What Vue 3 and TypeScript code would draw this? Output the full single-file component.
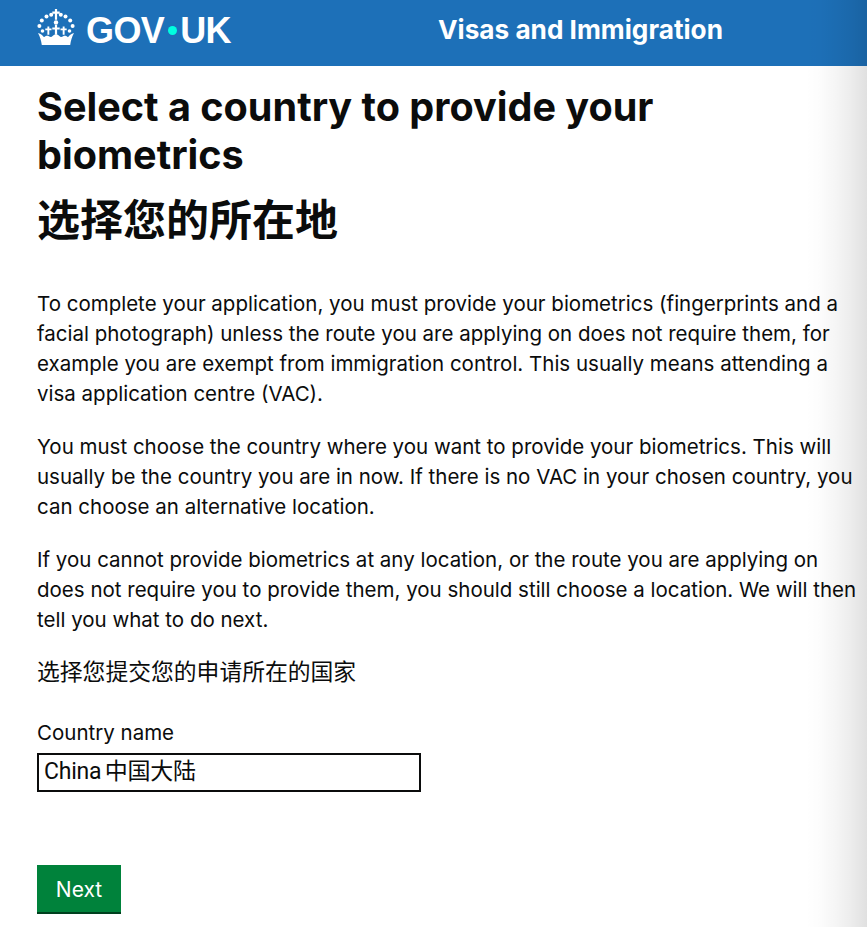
<script setup lang="ts">
const paragraphs: string[] = [
  'To complete your application, you must provide your biometrics (fingerprints and a facial photograph) unless the route you are applying on does not require them, for example you are exempt from immigration control. This usually means attending a visa application centre (VAC).',
  'You must choose the country where you want to provide your biometrics. This will usually be the country you are in now. If there is no VAC in your chosen country, you can choose an alternative location.',
  'If you cannot provide biometrics at any location, or the route you are applying on does not require you to provide them, you should still choose a location. We will then tell you what to do next.',
]
</script>

<template>
  <div class="page">
    <header class="bar">
      <div class="logo">
        <svg class="crown" viewBox="0 0 38 36" width="38" height="36" aria-hidden="true">
          <g fill="#fff">
            <path d="M17.9 0h2.2v2.6h2.6v2.2h-2.6v6h-2.200v-6h-2.600V2.600h2.600z" />
            <circle cx="9.500" cy="7.500" r="2" />
            <circle cx="14.200" cy="5.800" r="2" />
            <circle cx="23.800" cy="5.800" r="2" />
            <circle cx="28.500" cy="7.500" r="2" />
            <circle cx="4.800" cy="11.500" r="2" />
            <circle cx="33.200" cy="11.500" r="2" />
            <circle cx="2.400" cy="17" r="2" />
            <circle cx="35.600" cy="17" r="2" />
            <circle cx="19" cy="13.500" r="2.200" />
            <circle cx="5.500" cy="22" r="1.800" />
            <circle cx="32.500" cy="22" r="1.800" />
            <path d="M17.900 16h2.200v2.400h2.600v2.100h-2.600v5h-2.200v-5h-2.600v-2.100h2.600z" />
            <path d="M10.400 17.500h1.900v2h2.200v1.800h-2.200v4.400h-1.900v-4.400H8.300v-1.800h2.100z" />
            <path d="M25.700 17.500h1.900v2h2.100v1.800h-2.100v4.400h-1.900v-4.400h-2.200v-1.800h2.200z" />
            <path d="M1 24c3 1 4.800 2.600 6 4.200 2-1.500 3.500-1.800 4.800-1 1.600 1 2.600 1.100 3.800-.1 1.300-1.200 2.400-1.800 3.400-1.800s2.100.6 3.400 1.800c1.200 1.200 2.200 1.100 3.800.1 1.300-.8 2.800-.5 4.800 1 1.200-1.600 3-3.200 6-4.200-2 3.800-3.200 7.500-3.800 12H4.800C4.200 31.500 3 27.800 1 24z" />
          </g>
        </svg>
        <span class="wordmark">GOV<span class="dot"></span>UK</span>
      </div>
      <div class="service">Visas and Immigration</div>
    </header>

    <main class="content">
      <h1 class="title">Select a country to provide your biometrics</h1>
      <h1 class="title-zh">选择您的所在地</h1>
      <div class="copy">
        <p v-for="(text, i) in paragraphs" :key="i">{{ text }}</p>
        <p class="zh">选择您提交您的申请所在的国家</p>
      </div>
      <label class="label" for="country">Country name</label>
      <input id="country" class="input" type="text" value="China 中国大陆" />
      <button class="next" type="button">Next</button>
    </main>

    <div class="fade"></div>
  </div>
</template>

<style>
html, body { margin: 0; background: #fff; }
</style>

<style scoped>
.page {
  position: relative;
  width: 867px;
  height: 927px;
  overflow: hidden;
  font-family: "Inter", "Noto Sans CJK SC", sans-serif;
  color: #0b0c0c;
}
.bar {
  height: 66px;
  background: #1d70b8;
  display: flex;
  align-items: center;
  padding-left: 37px;
  box-sizing: border-box;
}
.logo {
  display: flex;
  align-items: center;
  gap: 11px;
  width: 401px;
  margin-bottom: 5px;
}
.crown { display: block; margin-top: -7px; }
.wordmark {
  font-family: "Liberation Sans", sans-serif;
  font-weight: 700;
  font-size: 36px;
  line-height: 40px;
  letter-spacing: -0.6px;
  color: #fff;
  display: flex;
  align-items: center;
}
.dot {
  width: 9px;
  height: 9px;
  border-radius: 50%;
  background: #00ffe0;
  margin: 0 3px 0 4px;
}
.service {
  color: #fff;
  font-weight: 700;
  font-size: 26.2px;
  line-height: 30px;
  margin-bottom: 7px;
}
.content {
  padding: 17px 0 0 37px;
  width: 830px;
}
.title {
  margin: 0;
  font-size: 39.6px;
  line-height: 48px;
  font-weight: 700;
  width: 700px;
}
.title-zh {
  margin: 10px 0 0;
  font-size: 43px;
  line-height: 56px;
  font-weight: 700;
  font-family: "Noto Sans CJK SC", sans-serif;
}
.copy { margin-top: 44px; }
.copy p {
  margin: 0 0 23px;
  font-size: 20.5px;
  line-height: 30px;
}
.copy .zh {
  font-family: "Noto Sans CJK SC", sans-serif;
  font-size: 22.8px;
  margin: -2px 0 0;
}
.label {
  display: block;
  margin-top: 32px;
  font-size: 20.5px;
  line-height: 30px;
}
.input {
  display: block;
  width: 384px;
  height: 39px;
  margin-top: 5px;
  box-sizing: border-box;
  border: 2px solid #0b0c0c;
  padding: 0 5px 7px;
  font-family: "Roboto", "Noto Sans CJK SC", sans-serif;
  font-size: 23px;
  letter-spacing: -0.25px;
  word-spacing: -2px;
  color: #0b0c0c;
  border-radius: 0;
  outline: none;
  background: #fff;
}
.next {
  display: block;
  margin-top: 73px;
  width: 84px;
  height: 49px;
  border: 0;
  border-bottom: 2px solid #00401e;
  background: #00823b;
  color: #fff;
  font-family: "Inter", sans-serif;
  font-size: 21px;
  padding: 2px 0 0;
}
.fade {
  position: absolute;
  top: 0;
  right: 0;
  bottom: 0;
  width: 62px;
  background: linear-gradient(to right, rgba(0,0,0,0), rgba(0,0,0,0.012) 25%, rgba(0,0,0,0.04) 50%, rgba(0,0,0,0.075) 75%, rgba(0,0,0,0.12));
  pointer-events: none;
}
</style>
